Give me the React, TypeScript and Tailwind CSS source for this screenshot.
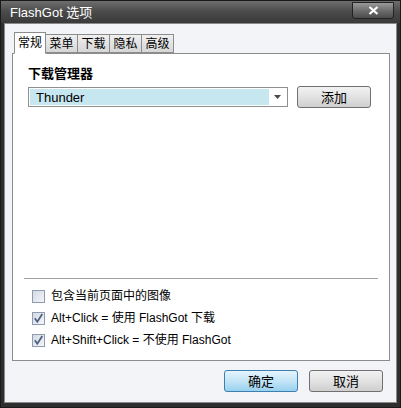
import React from 'react';

const tabs = ['常规', '菜单', '下载', '隐私', '高级'];

const options = [
  { label: '包含当前页面中的图像', checked: false },
  { label: 'Alt+Click = 使用 FlashGot 下载', checked: true },
  { label: 'Alt+Shift+Click = 不使用 FlashGot', checked: true },
];

const Check: React.FC<{ checked: boolean }> = ({ checked }) => (
  <span className="w-[13px] h-[13px] border border-[#8f9bb0] bg-gradient-to-br from-[#d4d9e2] to-[#f4f5f8] flex items-center justify-center shrink-0">
    {checked && (
      <svg width="11" height="11" viewBox="0 0 11 11">
        <path d="M1.8 5.2 L4.3 8.8 L9.3 1" fill="none" stroke="#4b5f82" strokeWidth="1.7" />
      </svg>
    )}
  </span>
);

const Btn: React.FC<{ label: string; primary?: boolean }> = ({ label, primary }) => (
  <button
    className={`h-[22px] w-[74px] rounded-[3px] border text-[13px] leading-none text-black ${
      primary
        ? 'border-[#3c7fb1] bg-gradient-to-b from-[#e5f4fc] via-[#c4e5f6] to-[#98d1ef]'
        : 'border-[#707070] bg-gradient-to-b from-[#f2f2f2] via-[#e2e2e2] to-[#cfcfcf]'
    }`}
  >
    {label}
  </button>
);

export default function App() {
  return (
    <div
      className="w-[401px] h-[408px] bg-[#2e2e2e] flex flex-col border border-[#1a1a1a]"
      style={{ fontFamily: '"Liberation Sans", "Noto Sans CJK SC", sans-serif' }}
    >
      {/* title bar */}
      <div className="h-[22px] flex items-center justify-between bg-gradient-to-b from-[#6e6e6e] via-[#4a4a4a] to-[#3a3a3a] pl-[9px] pr-[6px]">
        <span className="text-white text-[13px] leading-none">FlashGot 选项</span>
        <div className="w-[42px] h-[17px] mt-[-3px] rounded-b-[3px] border border-[#222] bg-gradient-to-b from-[#9a9a9a] via-[#6e6e6e] to-[#4c4c4c] flex items-center justify-center">
          <svg width="11" height="9" viewBox="0 0 11 9">
            <path d="M1.5 1 L9.5 8 M9.5 1 L1.5 8" stroke="#fff" strokeWidth="2.2" />
          </svg>
        </div>
      </div>

      {/* client area */}
      <div className="flex-1 mx-[3px] mb-[4px] border border-[#8a8a8a] bg-[#f3f4f8] flex flex-col px-[7px] pt-[8px]">
        <div className="flex items-end h-[21px] pl-[2px]">
          {tabs.map((t, i) => (
            <div
              key={t}
              className={`text-[12px] leading-none flex items-center justify-center border border-[#8c8c8c] ${
                i === 0
                  ? 'w-[32px] h-[22px] bg-white border-b-white relative z-10 mb-[-1px] pb-[1px]'
                  : 'w-[32px] h-[19px] bg-gradient-to-b from-[#f0f0f0] to-[#d6d6d6] border-l-0'
              }`}
            >
              {t}
            </div>
          ))}
        </div>
        <div className="h-[308px] w-[378px] bg-white border border-[#8c8c8c] flex flex-col px-[15px]">
          <div className="mt-[13px] text-[13px] font-bold leading-none">下载管理器</div>
          <div className="mt-[6px] flex items-center gap-[9px]">
            <div className="w-[260px] h-[20px] border border-[#8e8f8f] bg-white p-[1px] flex">
              <div className="flex-1 bg-[#c6e6f0] flex items-center pl-[6px] text-[13px] leading-none">Thunder</div>
              <div className="w-[17px] flex items-center justify-center">
                <svg width="7" height="4" viewBox="0 0 7 4">
                  <path d="M0 0 H7 L3.5 4 Z" fill="#4a4a4a" />
                </svg>
              </div>
            </div>
            <Btn label="添加" />
          </div>
          <div className="flex-1" />
          <div className="h-px bg-[#a0a0a0] mx-[-4px]" />
          <div className="flex flex-col pt-[6px] pb-[9px] pl-[4px]">
            {options.map((o) => (
              <div key={o.label} className="h-[22px] flex items-center gap-[6px] text-[12px] leading-none">
                <Check checked={o.checked} />
                <span>{o.label}</span>
              </div>
            ))}
          </div>
        </div>
        <div className="flex justify-end gap-[11px] pt-[9px] pr-[6px]">
          <Btn label="确定" primary />
          <Btn label="取消" />
        </div>
      </div>
    </div>
  );
}
